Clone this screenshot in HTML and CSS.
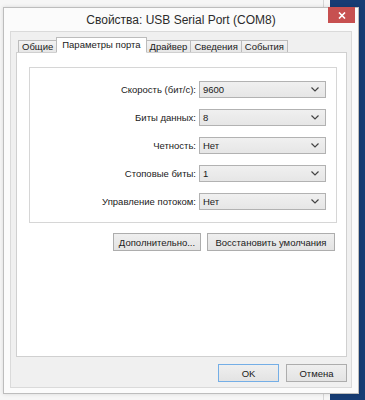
FILE: index.html
```html
<!DOCTYPE html>
<html lang="ru">
<head>
  <meta charset="UTF-8" />
  <title>Свойства: USB Serial Port (COM8)</title>
  <link rel="stylesheet" href="styles.css">
</head>
<body>
  <div class="window">
    <div class="caption">
      <span></span>
      <span class="caption-title">Свойства: USB Serial Port (COM8)</span>
      <span class="close">
        <svg width="8" height="7" viewBox="0 0 8 7"><path d="M1 0.5 L7 6.5 M7 0.5 L1 6.5" stroke="#fff" stroke-width="1.6"/></svg>
      </span>
    </div>

    <div class="client">
      <div class="tabs">
        <div class="tab">Общие</div>
        <div class="tab active">Параметры порта</div>
        <div class="tab">Драйвер</div>
        <div class="tab">Сведения</div>
        <div class="tab">События</div>
      </div>

      <div class="panel">
        <div class="group">
          <div class="field">
            <label>Скорость (бит/с):</label>
            <div class="combo"><span>9600</span><svg width="8" height="5" viewBox="0 0 8 5"><path d="M0.5 0.5 L4 4 L7.5 0.5" fill="none" stroke="#444" stroke-width="1.2"/></svg></div>
          </div>
          <div class="field">
            <label>Биты данных:</label>
            <div class="combo"><span>8</span><svg width="8" height="5" viewBox="0 0 8 5"><path d="M0.5 0.5 L4 4 L7.5 0.5" fill="none" stroke="#444" stroke-width="1.2"/></svg></div>
          </div>
          <div class="field">
            <label>Четность:</label>
            <div class="combo"><span>Нет</span><svg width="8" height="5" viewBox="0 0 8 5"><path d="M0.5 0.5 L4 4 L7.5 0.5" fill="none" stroke="#444" stroke-width="1.2"/></svg></div>
          </div>
          <div class="field">
            <label>Стоповые биты:</label>
            <div class="combo"><span>1</span><svg width="8" height="5" viewBox="0 0 8 5"><path d="M0.5 0.5 L4 4 L7.5 0.5" fill="none" stroke="#444" stroke-width="1.2"/></svg></div>
          </div>
          <div class="field">
            <label>Управление потоком:</label>
            <div class="combo"><span>Нет</span><svg width="8" height="5" viewBox="0 0 8 5"><path d="M0.5 0.5 L4 4 L7.5 0.5" fill="none" stroke="#444" stroke-width="1.2"/></svg></div>
          </div>
        </div>

        <div class="panel-buttons">
          <button class="btn btn-more">Дополнительно...</button>
          <button class="btn btn-reset">Восстановить умолчания</button>
        </div>
      </div>

      <div class="dialog-buttons">
        <button class="btn btn-dlg default">OK</button>
        <button class="btn btn-dlg">Отмена</button>
      </div>
    </div>
  </div>
</body>
</html>
```

FILE: styles.css
```css
* {
  box-sizing: border-box;
}
body {
  margin: 0;
  width: 365px;
  height: 400px;
  overflow: hidden;
  font-family: "Liberation Sans", Arial, sans-serif;
  background: linear-gradient(to right, #f6f6f6 323px, #d6d6d6 323px, #d6d6d6 324px, #f6f6f6 324px, #f6f6f6 330px, #173c74 330px);
}
.window {
  margin: 7px 0 0 3px;
  width: 356px;
  background-color: #fbfbfb;
  border: 1px solid #bdbdbd;
  box-shadow: 0 0 4px rgba(0, 0, 0, 0.12);
}
.caption {
  height: 23px;
  display: grid;
  grid-template-columns: 1fr auto 1fr;
  align-items: start;
}
.caption-title {
  font-size: 12px;
  color: #2b2b2b;
  line-height: 23px;
  padding-top: 1px;
  white-space: nowrap;
}
.close {
  justify-self: end;
  margin: -1px 3px 0 0;
  width: 27px;
  height: 16px;
  background-color: #c75050;
  display: flex;
  align-items: center;
  justify-content: center;
}
.client {
  margin: 0 6px 5px 6px;
  border: 1px solid #dadada;
  background-color: #f0f0f0;
  padding: 5px 4px 5px 5px;
  font-size: 9.5px;
  color: #1a1a1a;
}
.tabs {
  display: flex;
  align-items: flex-end;
  height: 15px;
  padding-left: 2px;
  position: relative;
  z-index: 1;
}
.tab {
  height: 12px;
  line-height: 11px;
  padding: 0 3px;
  border: 1px solid #bcbcbc;
  border-bottom: none;
  margin-right: -1px;
  background: linear-gradient(#f3f3f3, #e7e7e7);
  white-space: nowrap;
}
.tab.active {
  height: 16px;
  line-height: 14px;
  background: #fff;
  padding: 0 5px;
  border-bottom: 1px solid #fff;
  margin-bottom: -1px;
}
.panel {
  height: 305px;
  border: 1px solid #d0d0d0;
  background-color: #fff;
  padding: 14px 9px 0 12px;
}
.group {
  border: 1px solid #d6d6d6;
  padding: 13px 10px 12px 0;
  display: flex;
  flex-direction: column;
  gap: 11px;
}
.field {
  display: grid;
  grid-template-columns: 1fr 127px;
  column-gap: 3px;
  align-items: center;
}
.field label {
  text-align: right;
}
.combo {
  height: 17px;
  border: 1px solid #b2b2b2;
  background: linear-gradient(#f0f0f0, #e6e6e6);
  display: flex;
  align-items: center;
  justify-content: space-between;
  padding: 0 6px 0 3px;
}
.panel-buttons {
  display: flex;
  justify-content: flex-end;
  gap: 6px;
  margin-top: 10px;
  padding-right: 2px;
}
.btn {
  font-family: "Liberation Sans", Arial, sans-serif;
  font-size: 9.5px;
  color: #1a1a1a;
  height: 18px;
  padding: 0;
  border: 1px solid #adadad;
  background: linear-gradient(#efefef, #e3e3e3);
}
.btn-more {
  width: 88px;
}
.btn-reset {
  width: 128px;
}
.dialog-buttons {
  display: flex;
  justify-content: flex-end;
  gap: 7px;
  margin-top: 7px;
}
.btn-dlg {
  width: 61px;
}
.btn-dlg.default {
  border-color: #74aee6;
}
```
